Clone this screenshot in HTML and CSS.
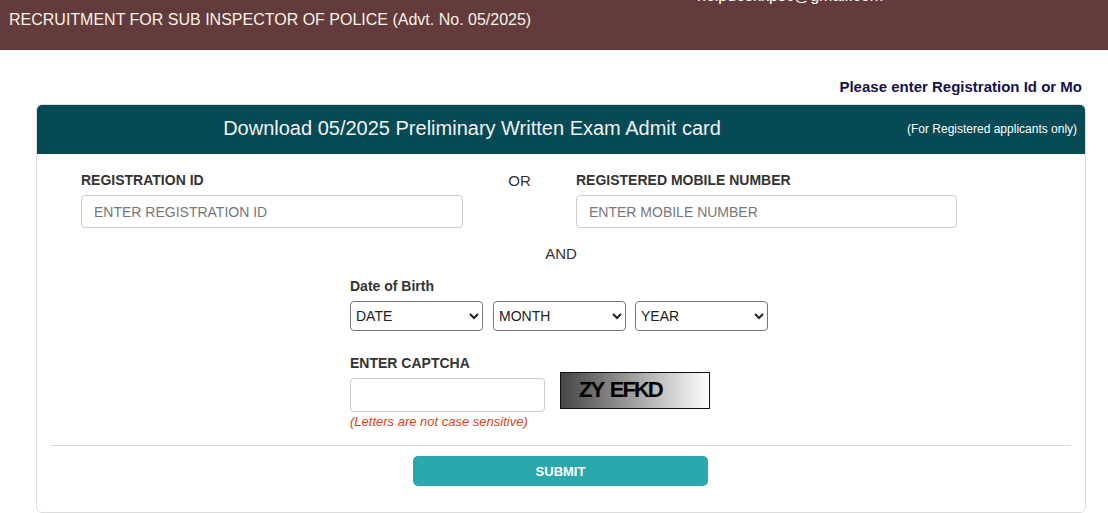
FILE: index.html
```html
<!DOCTYPE html>
<html lang="en">
<head>
<meta charset="utf-8">
<title>Admit card</title>
<link rel="stylesheet" href="styles.css">
</head>
<body>
<header class="topbar">
  <div class="topbar-title">RECRUITMENT FOR SUB INSPECTOR OF POLICE (Advt. No. 05/2025)</div>
  <div class="topbar-mail">helpdeskkpsc@gmail.com</div>
</header>
<div class="notice-row"><div class="notice">Please enter Registration Id or Mo</div></div>
<main class="card">
  <div class="card-head">
    <div class="card-title">Download 05/2025 Preliminary Written Exam Admit card</div>
    <div class="card-note">(For Registered applicants only)</div>
  </div>
  <div class="card-body">
    <div class="id-row">
      <div class="field">
        <label class="lbl">REGISTRATION ID</label>
        <input class="txt" type="text" placeholder="ENTER REGISTRATION ID">
      </div>
      <div class="or">OR</div>
      <div class="field">
        <label class="lbl">REGISTERED MOBILE NUMBER</label>
        <input class="txt" type="text" placeholder="ENTER MOBILE NUMBER">
      </div>
    </div>
    <div class="and">AND</div>
    <div class="dob">
      <label class="lbl">Date of Birth</label>
      <div class="selects">
        <select class="sel"><option>DATE</option></select>
        <select class="sel"><option>MONTH</option></select>
        <select class="sel"><option>YEAR</option></select>
      </div>
    </div>
    <div class="captcha">
      <label class="lbl">ENTER CAPTCHA</label>
      <div class="captcha-row">
        <div class="captcha-input">
          <input class="txt cap-txt" type="text">
          <div class="hint">(Letters are not case sensitive)</div>
        </div>
        <div class="captcha-img">ZY EFKD</div>
      </div>
    </div>
    <hr class="sep">
    <div class="actions"><button class="submit" type="button">SUBMIT</button></div>
  </div>
</main>
</body>
</html>
```
FILE: styles.css
```css
* { box-sizing: border-box; }
body {
  margin: 0;
  font-family: "Liberation Sans", Arial, sans-serif;
  color: #333;
  background: #fff;
  width: 1108px;
  height: 513px;
  overflow: hidden;
}
.topbar {
  height: 50px;
  background: #633b3c;
  display: flex;
  align-items: flex-start;
}
.topbar-title {
  color: #f7f3e3;
  font-size: 16px;
  padding: 11px 0 0 9px;
  width: 697px;
}
.topbar-mail {
  color: #fff;
  font-size: 16px;
  margin-top: -13px;
}
.notice-row {
  display: flex;
  justify-content: flex-end;
  padding: 28px 26px 0 0;
  height: 54px;
}
.notice {
  font-weight: bold;
  font-size: 15px;
  color: #14124a;
}
.card {
  margin-left: 36px;
  width: 1050px;
  height: 409px;
  border: 1px solid #ddd;
  border-radius: 6px;
  overflow: hidden;
}
.card-head {
  background: #064a55;
  height: 49px;
  display: grid;
  grid-template-columns: 870px 1fr;
  align-items: center;
}
.card-title {
  text-align: center;
  color: #f2f2f2;
  font-size: 20px;
  margin-top: -2px;
}
.card-note {
  text-align: right;
  color: #fff;
  font-size: 12px;
  padding-right: 9px;
  white-space: nowrap;
  margin-top: -2px;
}
.card-body {
  padding-top: 18px;
}
.id-row {
  display: grid;
  grid-template-columns: 382px 113px 381px;
  padding-left: 44px;
}
.field { display: flex; flex-direction: column; }
.lbl {
  font-weight: bold;
  font-size: 14px;
  color: #333;
  display: block;
}
.field .lbl { margin-bottom: 7px; }
.txt {
  height: 33px;
  border: 1px solid #ccc;
  border-radius: 4px;
  font-family: inherit;
  font-size: 14px;
  padding: 0 12px;
  background: #fff;
}
.txt::placeholder { color: #777; }
.or {
  text-align: center;
  font-size: 15px;
}
.and {
  text-align: center;
  font-size: 15px;
  margin-top: 17px;
}
.dob {
  padding-left: 313px;
  margin-top: 16px;
}
.dob .lbl { margin-bottom: 7px; }
.selects { display: flex; gap: 10px; }
.sel {
  width: 133px;
  height: 30px;
  border: 1px solid #767676;
  border-radius: 4px;
  font-family: inherit;
  font-size: 14px;
  color: #222;
  background: #fff;
  padding: 0 1px;
}
.sel:last-child { margin-left: -1px; }
.captcha {
  padding-left: 313px;
  margin-top: 24px;
}
.captcha-row { display: flex; gap: 15px; }
.captcha .lbl { margin-bottom: 0; }
.captcha-input { padding-top: 7px; }
.cap-txt { width: 195px; height: 34px; display: block; }
.hint {
  color: #d9441c;
  font-style: italic;
  font-size: 13px;
  margin-top: 2px;
}
.captcha-img {
  width: 150px;
  height: 37px;
  border: 1px solid #111;
  background: linear-gradient(to right, #454545, #ffffff);
  font-weight: bold;
  font-size: 22px;
  letter-spacing: -2px;
  word-spacing: 3px;
  color: #000;
  padding: 4px 0 0 18px;
  margin-top: 1px;
}
.sep {
  border: 0;
  border-top: 1px solid #ddd;
  margin: 16px 14px 0 14px;
}
.actions { display: flex; padding-left: 376px; margin-top: 10px; }
.submit {
  width: 295px;
  height: 30px;
  border: 0;
  border-radius: 5px;
  background: #2aa8ad;
  color: #fff;
  font-family: inherit;
  font-weight: bold;
  font-size: 13px;
}
```
